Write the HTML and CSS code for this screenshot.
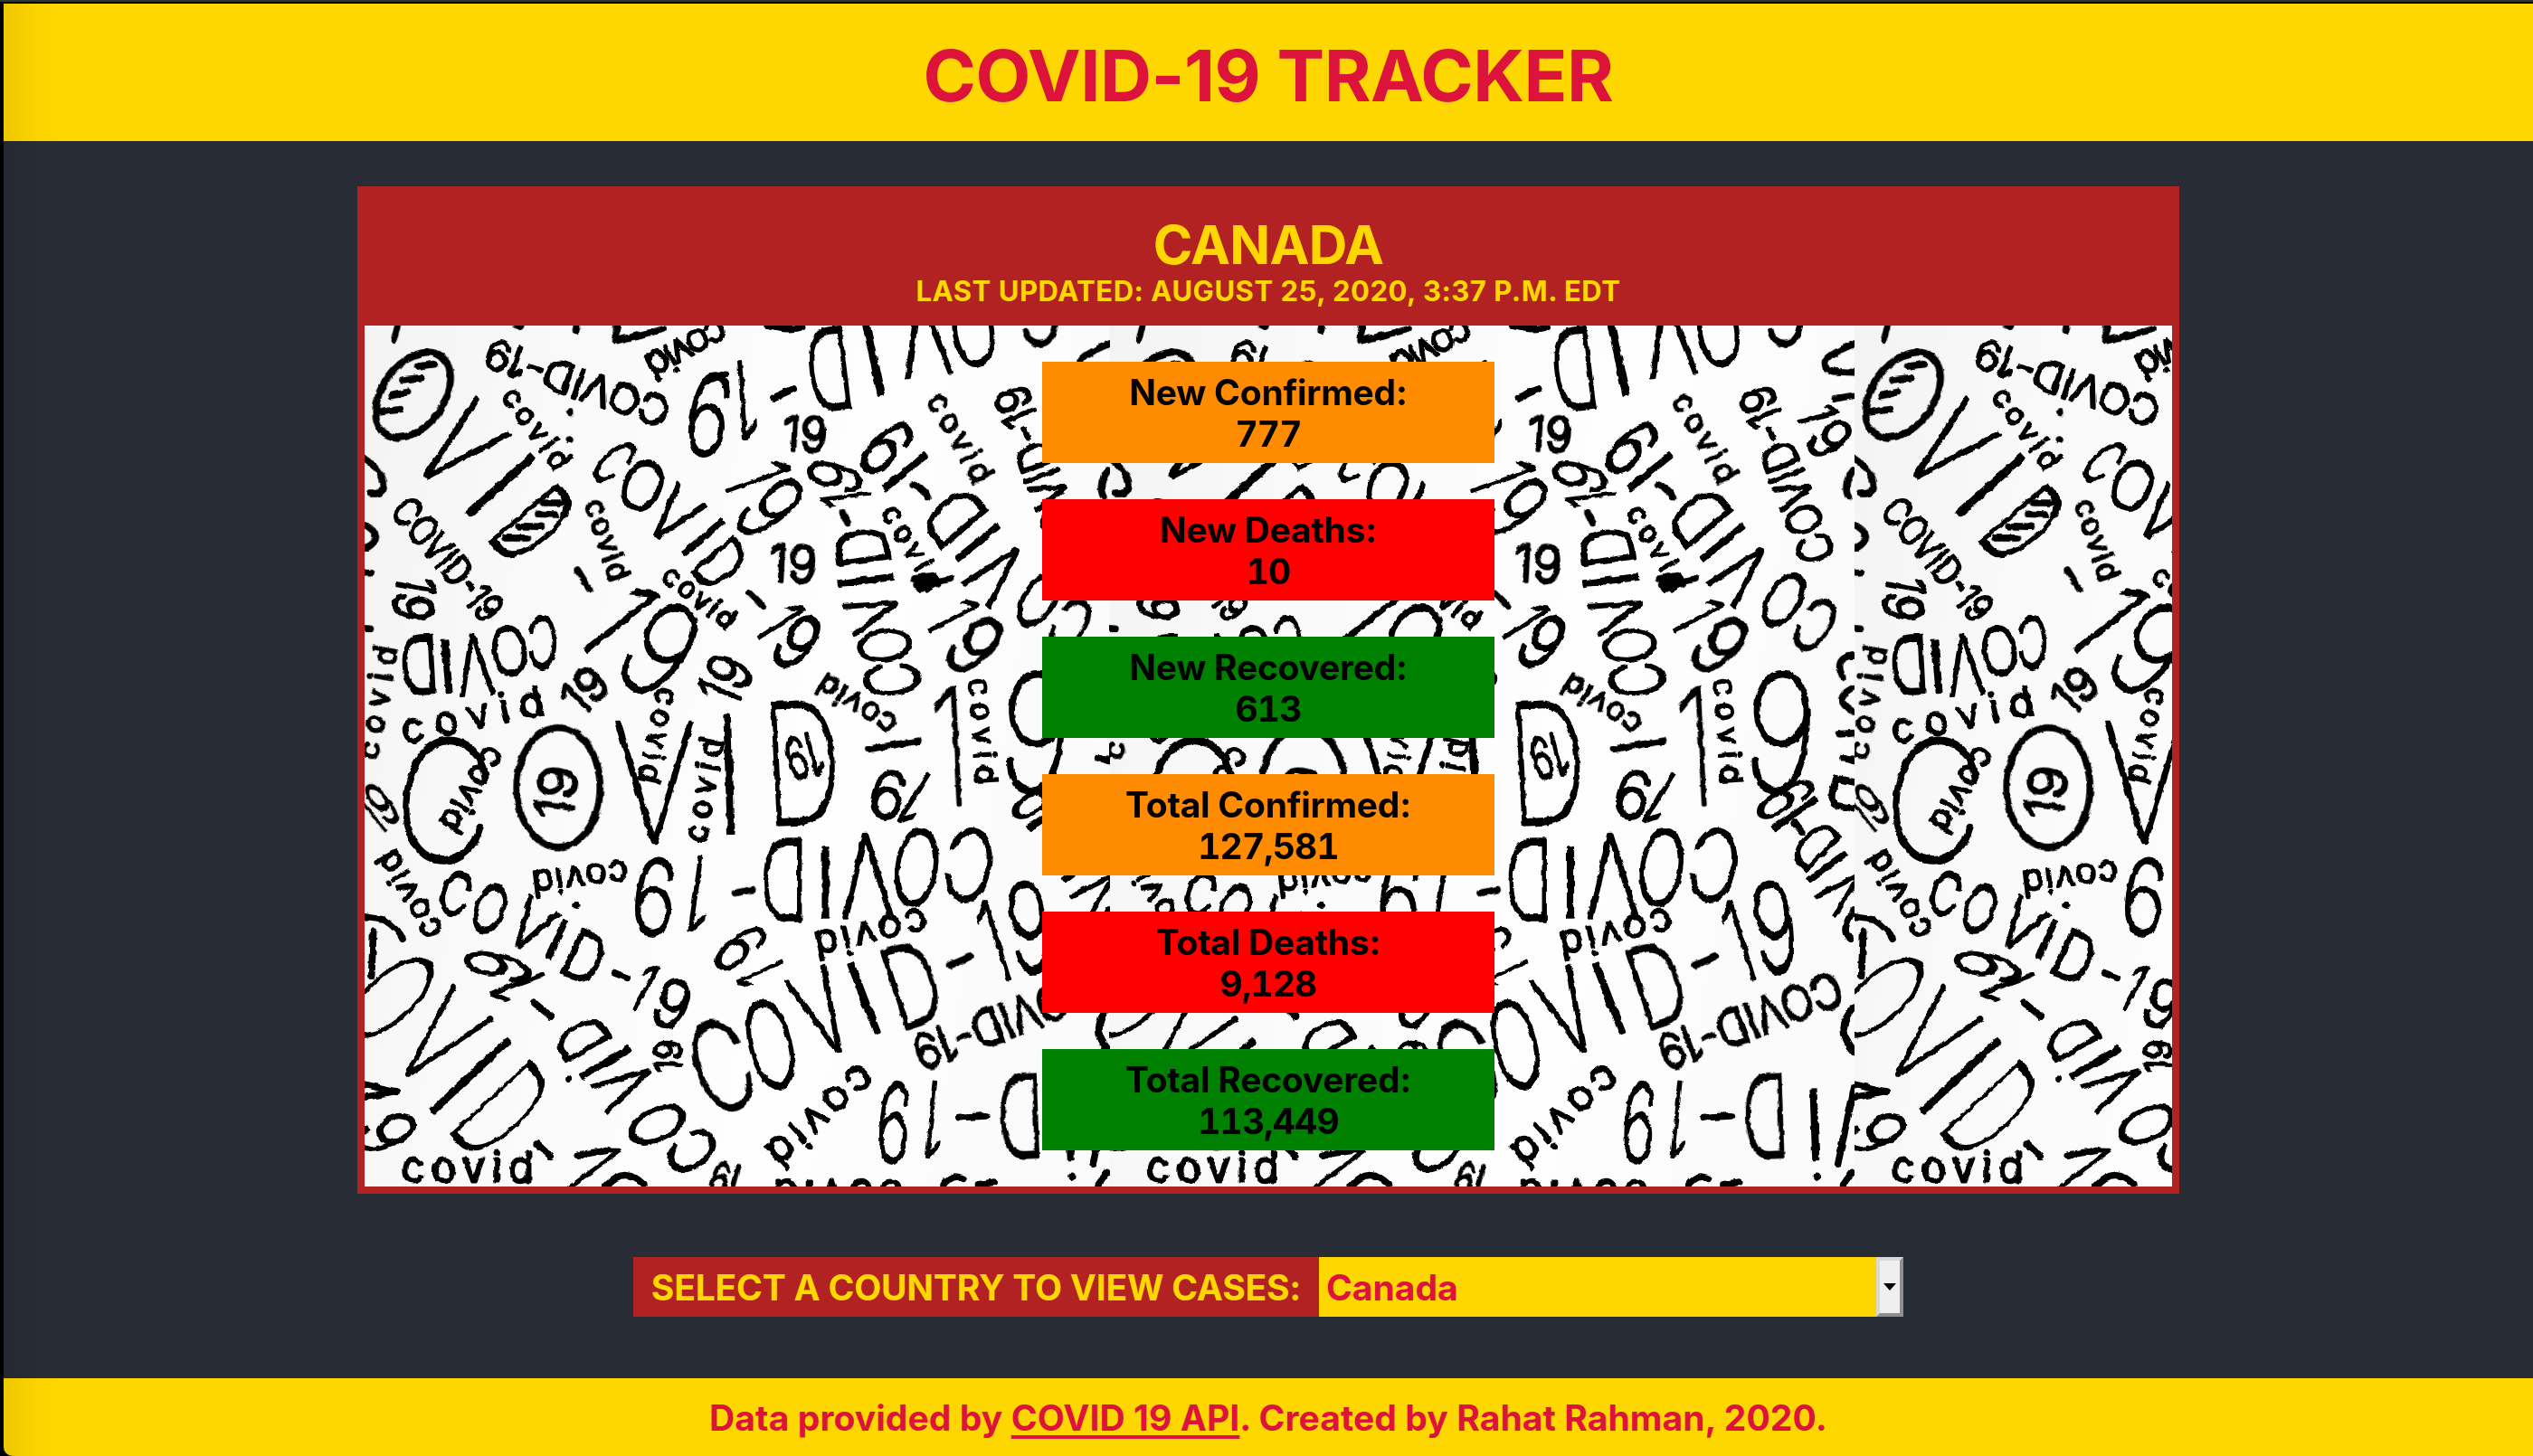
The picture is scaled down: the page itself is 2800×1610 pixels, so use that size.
FILE: index.html
```html
<!DOCTYPE html>
<html lang="en">
<head>
<meta charset="utf-8">
<title>COVID-19 Tracker</title>
<link rel="stylesheet" href="styles.css">
</head>
<body>
<div class="window">
  <header class="banner"><h1 class="banner-title">COVID-19 TRACKER</h1></header>
  <main class="main">
    <section class="panel">
      <div class="panel-head">
        <h2 class="country">CANADA</h2>
        <p class="updated">LAST UPDATED: AUGUST 25, 2020, 3:37 P.M. EDT</p>
      </div>
      <div class="panel-body">
        <svg class="paper" aria-hidden="true">
          <defs>
            <linearGradient id="sheet" x1="0" y1="0" x2="1" y2="0.2">
              <stop offset="0" stop-color="#f3f3f3"/>
              <stop offset="0.25" stop-color="#f9f9f9"/>
              <stop offset="0.7" stop-color="#fefefe"/>
              <stop offset="1" stop-color="#fbfbfb"/>
            </linearGradient>
            <filter id="rough" filterUnits="userSpaceOnUse" x="0" y="0" width="2471" height="2856" color-interpolation-filters="sRGB">
              <feTurbulence type="fractalNoise" baseFrequency="0.03" numOctaves="3" seed="4"/>
              <feDisplacementMap in="SourceGraphic" scale="14" xChannelSelector="R" yChannelSelector="G"/>
            </filter>
            <symbol id="tile" viewBox="0 0 2471 2856">
              <rect width="2471" height="2856" fill="url(#sheet)"/>
              <g id="ink" class="ink" filter="url(#rough)"></g>
            </symbol>
          </defs>
          <use href="#tile" x="0" y="0" width="823.5" height="952"/>
          <use href="#tile" x="823.5" y="0" width="823.5" height="952"/>
          <use href="#tile" x="1647" y="0" width="823.5" height="952"/>
        </svg>
        <div class="stats">
          <div class="stat confirmed"><span>New Confirmed:</span><span class="count">777</span></div>
          <div class="stat deaths"><span>New Deaths:</span><span class="count">10</span></div>
          <div class="stat recovered"><span>New Recovered:</span><span class="count">613</span></div>
          <div class="stat confirmed"><span>Total Confirmed:</span><span class="count">127,581</span></div>
          <div class="stat deaths"><span>Total Deaths:</span><span class="count">9,128</span></div>
          <div class="stat recovered"><span>Total Recovered:</span><span class="count">113,449</span></div>
        </div>
      </div>
    </section>
    <div class="picker">
      <div class="picker-label">SELECT A COUNTRY TO VIEW CASES:</div>
      <div class="picker-value">Canada</div>
      <div class="picker-button"><span class="arrow"></span></div>
    </div>
  </main>
  <footer class="footer"><p class="credit">Data provided by <a class="link">COVID 19 API</a>. Created by Rahat Rahman, 2020.</p></footer>
</div>
<script src="doodles.js"></script>
</body>
</html>
```
FILE: styles.css
```css
* { box-sizing: border-box; margin: 0; padding: 0; }

body {
  width: 2800px;
  height: 1610px;
  overflow: hidden;
  background: #000;
  border-top: 2px solid #333;
  padding: 2px 0 0 4px;
  font-family: Inter, "Liberation Sans", sans-serif;
  font-weight: 700;
}

.window {
  position: relative;
  display: flex;
  flex-direction: column;
  height: 1606px;
  background: #282c34;
  border-bottom-left-radius: 10px;
  overflow: hidden;
}

.window::after {
  content: "";
  position: absolute;
  inset: 0 auto 0 0;
  width: 70px;
  background: linear-gradient(to right, rgba(0, 0, 0, 0.07), rgba(0, 0, 0, 0.015) 55%, transparent);
}

.banner { height: 152px; padding-top: 31px; background: #ffd700; text-align: center; }
.banner-title { font-size: 79px; font-weight: 700; line-height: 96px; letter-spacing: -0.5px; color: #dc143c; }

.main { flex: 1; display: flex; flex-direction: column; align-items: center; padding-top: 50px; }

.panel { width: 2014px; border: 8px solid #b22222; }
.panel-head { padding: 22px 0; background: #b22222; color: #ffd700; text-align: center; }
.country { font-size: 59px; font-weight: 650; line-height: 70px; letter-spacing: -0.8px; }
.updated { font-size: 31px; font-weight: 700; line-height: 32px; letter-spacing: 0.53px; }

.panel-body { position: relative; height: 952px; overflow: hidden; background: #f9f9f9; }
.paper { position: absolute; inset: 0; width: 100%; height: 100%; background: #f9f9f9; }
.ink { font-family: Inter, sans-serif; fill: #000; stroke: #000; stroke-linecap: round; stroke-linejoin: round; }
.ink path, .ink ellipse { fill: none; stroke-width: 23px; }

.stats { position: relative; display: flex; flex-direction: column; align-items: center; gap: 40px; padding-top: 40px; }
.stat {
  display: flex;
  flex-direction: column;
  align-items: center;
  width: 500px;
  height: 112px;
  padding-top: 11px;
  font-size: 39px;
  line-height: 46px;
  letter-spacing: -0.25px;
  color: #000;
}
.count { font-variant-numeric: tabular-nums; letter-spacing: -0.9px; }
.confirmed { background: #ff8c00; }
.deaths { background: #f00; }
.recovered { background: #008000; }

.picker { display: flex; height: 66px; margin-top: 70px; font-size: 39px; line-height: 68px; }
.picker-label { width: 758px; background: #b22222; color: #ffd700; text-align: center; letter-spacing: -0.2px; white-space: nowrap; }
.picker-value { width: 616px; padding-left: 8px; background: #ffd700; color: #dc143c; }
.picker-button {
  display: flex;
  align-items: center;
  justify-content: center;
  width: 30px;
  background: #efefef;
  border: 4px solid;
  border-color: #d9d9d9 #8f8f8f #8f8f8f #d9d9d9;
}
.arrow { border: 7px solid transparent; border-top: 8px solid #000; border-bottom: 0; }

.footer { height: 86px; background: #ffd700; color: #dc143c; text-align: center; font-size: 39px; letter-spacing: 0.09px; line-height: 88px; }
.link { text-decoration: underline; text-decoration-thickness: 4px; text-underline-offset: 5px; text-decoration-skip-ink: none; }
```
FILE: doodles.js
```js
// Scribbled words on the paper: [text, centre x, centre y, width, height, angle],
// grouped by the part of the sheet they are on. Width 0 keeps the natural width.
const groups = [
  { at: [-39, -30], words: [
    ["V",355,430,190,300,48],["I",490,560,0,283,48],["D",600,690,150,295,50],
    ["COVID-19",745,220,640,100,199],["covid",610,370,310,85,54],
    ["C",868,482,85,165,48],["O",960,562,150,165,25],["V",1065,660,140,185,40],["I",1162,732,0,163,50],["D",1220,820,120,185,50],
    ["COVID-19",315,805,490,95,50],["19",205,935,150,130,100],
    ["C",630,1080,105,170,180],["O",520,1110,130,160,172],["V",405,1155,125,200,175],["I",312,1160,0,175,175],["D",220,1155,130,195,177],
    ["1",880,1000,110,300,52],["9",1020,1105,210,310,35],
    ["covid",845,740,280,85,72],["covid",1150,930,280,80,38],["covid",78,1280,380,90,-80],
    ["covid",395,1320,480,115,-12],["19",770,1240,150,120,-45],["19",1235,1205,160,145,-65],
    ["covid",1015,1390,320,85,102],["V",1000,1545,280,400,0],["I",1248,1520,0,390,-2],
    ["covid",1110,110,290,110,152],["9",1180,325,150,270,190]
  ], strokes: [
    "M215 165L270 158M165 210L225 203M130 262L185 250M85 318L155 308",
    "M635 618L690 618M615 655L675 657M550 695L625 697M505 735L580 735",
    "M150 30L137 78M39 470Q100 510 103 560Q100 590 60 588M39 690Q110 730 45 768M40 848L58 848M40 1035L58 1036",
    "M745 840L785 905M875 35L872 80L1030 42M720 318L722 319M718 408L720 408M545 32L558 36M743 32L740 46"
  ], rings: [[200,260,102,158,36]] },
  { at: [-39, 1410], words: [
    ["covid",1162,130,350,90,-80],["C",305,165,330,400,6],["covid",400,130,310,95,122],["19",675,140,180,130,-83],
    ["19",80,190,110,150,-38],["covid",185,480,320,95,-120],
    ["C",340,475,105,140,18],["O",455,525,115,160,20],["V",592,582,130,165,32],["I",677,627,0,135,24],["D",770,685,130,165,25],
    ["1",965,785,60,160,30],["9",1060,840,120,160,22],["covid",755,425,320,100,173],
    ["9",1000,485,150,250,186],["1",1150,475,80,250,188],
    ["O",125,820,190,330,48],["V",290,955,190,320,42],["I",390,1080,0,335,47],["D",495,1195,170,350,47],
    ["9",480,715,100,215,283],["1",550,785,70,185,250],["D",760,955,120,170,240],["I",838,1035,0,185,240],["V",900,1110,120,190,240],["O",1010,1240,130,190,245],["C",1125,1330,130,165,235],
    ["19",1045,1015,110,90,-88],["C",1222,1045,200,300,-20],
    ["9",110,1270,120,200,68],["covid",380,1380,440,120,0],["1",780,1390,70,240,54],["19",1240,1425,110,110,195]
  ], strokes: [
    "M39 552L105 562Q150 590 165 625M68 600L62 748M868 738L910 754M600 835L657 882M717 1090L718 1090M742 512L743 513",
    "M39 1108L148 1132L39 1150M610 1305L655 1345M745 1342L840 1328M840 1445Q900 1375 965 1440"
  ], rings: [[682,122,138,198,0]] },
  { at: [1131, -30], words: [
    ["1",135,275,80,260,176],["1",170,530,70,220,70],["9",215,635,130,240,52]
  ], strokes: ["M225 270L292 240M205 30Q280 50 320 32M0 215L65 190"], rings: [] },
  { at: [1131, 1410], words: [
    ["D",260,430,160,270,180],["I",398,435,0,230,180],["V",535,415,180,275,178],["O",700,388,165,250,188],["C",875,380,170,235,190],
    ["9",115,655,100,190,232],["1",183,742,50,160,246],["covid",550,610,380,110,167],
    ["O",215,975,170,290,-14],["V",385,870,160,280,-23],["I",525,822,0,245,-21],["D",685,775,180,270,-18],["1",955,635,80,270,-17]
  ], strokes: ["M98 472L155 461M812 712L876 684"], rings: [] },
  { at: [1241, -30], words: [
    ["D",300,175,155,270,173],["I",447,140,0,245,168],["V",615,60,170,270,173],["O",778,50,160,220,172],["C",1000,10,140,170,180],
    ["19",220,390,150,115,3],["9",320,530,100,180,285],["1",355,605,50,160,263],["D",410,765,135,175,262],["I",420,875,0,180,263],["V",445,980,120,165,250],["O",485,1090,125,175,262],["C",508,1205,120,180,265],
    ["9",490,435,120,200,225],["I",552,515,0,175,231],["D",715,665,150,200,230],["I",792,750,0,175,231],["V",855,850,140,205,222],["O",995,940,130,190,212],["C",1100,1025,120,180,212],
    ["covid",735,400,330,90,60],["COVID-19",1005,525,620,115,249],["covid",580,765,310,80,60],["19",180,820,160,125,3],
    ["1",135,1010,60,175,57],["9",195,1080,120,190,38],["1",710,990,60,180,62],["9",785,1090,140,210,45],
    ["covid",390,1290,290,90,213],["1",700,1425,130,390,-3],["9",985,1380,240,390,4],["covid",812,1375,350,85,86],
    ["D",210,1480,260,400,-3],["19",215,1460,120,140,165],
    ["1",1108,325,50,130,75],["9",1148,405,100,150,55]
  ], strokes: [
    "M345 650L362 685M575 555Q610 565 628 598M35 915L80 960M430 1435L595 1408M1165 272L1230 262M1230 90Q1080 150 1160 182L1230 185",
    "M590 890L705 870M580 870L640 860L660 885L600 900M1225 510Q1190 560 1210 598M1228 1125Q1160 1130 1190 1195M1225 1232Q1150 1270 1228 1312M1180 1385L1228 1382M1195 1466L1228 1468"
  ], rings: [] },
  { at: [1241, 1410], words: [
    ["9",965,585,150,300,-8],["9",495,145,120,160,192],["1",590,160,60,185,212],
    ["9",1000,160,90,200,240],["I",1030,210,0,170,235],["D",1100,315,110,160,225],["I",1140,385,0,150,233],["V",1190,465,110,150,228],
    ["COVID-19",885,895,640,120,159],["covid",275,1215,430,120,138],
    ["9",515,1235,115,260,184],["1",650,1225,70,250,186],["D",935,1210,155,275,178],["I",1098,1240,0,230,178],["covid",330,1475,430,120,180]
  ], strokes: [
    "M1030 240L1055 270M730 1217L820 1212M680 1443Q710 1400 745 1420M795 1440L845 1432M1103 1412L1104 1413M1222 1400L1190 1445M1230 1115L1175 1370",
    "M1230 105L1170 92Q1140 170 1170 182L1230 192M1228 528Q1180 600 1215 622M1230 850Q1160 920 1230 1000M1195 24L1230 34"
  ], rings: [] }
];

const NS = "http://www.w3.org/2000/svg";
const ink = document.getElementById("ink");
function add(parent, name, attrs) {
  const el = document.createElementNS(NS, name);
  for (const key in attrs) el.setAttribute(key, attrs[key]);
  return parent.appendChild(el);
}
// Large letters take a thinner cut, so that every stroke is as wide as the pen.
function pen(size) {
  if (size > 420) return { weight: 100, stroke: 14 };
  if (size > 300) return { weight: 200, stroke: 10 };
  return { weight: 300, stroke: Math.min(9, Math.max(7, 22 - size * 0.065)) };
}
for (const { at, words, strokes, rings } of groups) {
  const g = add(ink, "g", { transform: `translate(${at[0]} ${at[1]})` });
  for (const [text, x, y, w, h, a] of words) {
    const height = text === "covid" ? h * 0.85 : h;
    const size = height / 0.727;
    const { weight, stroke } = pen(size);
    const attrs = {
      transform: `translate(${x} ${y}) rotate(${a})`,
      y: height / 2, "font-size": size, "font-weight": weight,
      "text-anchor": "middle", "stroke-width": stroke
    };
    if (w) {
      attrs.textLength = w;
      attrs.lengthAdjust = text === "covid" ? "spacing" : "spacingAndGlyphs";
    }
    add(g, "text", attrs).textContent = text;
  }
  for (const d of strokes) add(g, "path", { d });
  for (const [x, y, rx, ry, a] of rings) add(g, "ellipse", { rx, ry, transform: `translate(${x} ${y}) rotate(${a})` });
}
```
